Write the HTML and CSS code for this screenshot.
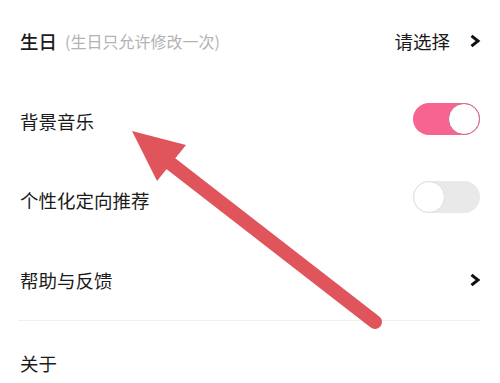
FILE: index.html
```html
<!DOCTYPE html>
<html lang="zh-CN">
<head>
<meta charset="utf-8">
<link rel="stylesheet" href="styles.css">
</head>
<body>
<div class="page">
  <div class="list">
    <div class="row row-1">
      <div class="label"><span class="title strong">生日</span><span class="hint">(生日只允许修改一次)</span></div>
      <div class="value">
        <span class="value-text">请选择</span>
        <svg class="chev" viewBox="0 0 12 14" width="12" height="14"><polyline points="2.5,1.8 9,7 2.5,12.2" fill="none" stroke="#111" stroke-width="3" stroke-linejoin="miter" stroke-linecap="butt"/></svg>
      </div>
    </div>
    <div class="row row-2">
      <div class="label"><span class="title">背景音乐</span></div>
      <div class="toggle on"><span class="knob"></span></div>
    </div>
    <div class="row row-3">
      <div class="label"><span class="title">个性化定向推荐</span></div>
      <div class="toggle off"><span class="knob"></span></div>
    </div>
    <div class="row row-4">
      <div class="label"><span class="title">帮助与反馈</span></div>
      <div class="value">
        <svg class="chev" viewBox="0 0 12 14" width="12" height="14"><polyline points="2.5,1.8 9,7 2.5,12.2" fill="none" stroke="#111" stroke-width="3" stroke-linejoin="miter" stroke-linecap="butt"/></svg>
      </div>
    </div>
    <div class="divider"></div>
    <div class="row row-5">
      <div class="label"><span class="title">关于</span></div>
    </div>
  </div>
  <svg class="arrow" viewBox="0 0 500 383" width="500" height="383">
    <line x1="170" y1="163" x2="375" y2="322" stroke="#e0545b" stroke-width="14" stroke-linecap="round"/>
    <polygon points="132,131 186,145 157,181" fill="#e0545b"/>
  </svg>
</div>
</body>
</html>
```

FILE: styles.css
```css
html, body {
  margin: 0;
  padding: 0;
  background: #ffffff;
}

.page {
  position: relative;
  width: 500px;
  height: 383px;
  overflow: hidden;
  font-family: "Noto Sans CJK SC", "Noto Sans", sans-serif;
  color: #1b1b1b;
}

.list {
  display: flex;
  flex-direction: column;
}

.row {
  display: flex;
  align-items: center;
  justify-content: space-between;
  padding: 0 20px 0 20px;
}

.row-1 { height: 82px; }
.row-2 { height: 78px; }
.row-3 { height: 80px; }
.row-4 { height: 80px; }
.row-5 { height: 84px; }

.label {
  display: flex;
  align-items: center;
}

.title {
  font-size: 18.5px;
  line-height: 24px;
  font-weight: 400;
}

.title.strong {
  font-weight: 500;
}

.hint {
  margin-left: 8px;
  font-size: 16px;
  line-height: 24px;
  color: #b3b3b3;
}

.value {
  display: flex;
  align-items: center;
}

.value-text {
  font-size: 18.5px;
  line-height: 24px;
  margin-right: 19px;
}

.chev {
  display: block;
  margin-right: -1px;
}

.toggle {
  position: relative;
  box-sizing: border-box;
  width: 67px;
  height: 32px;
  border-radius: 16px;
  margin-bottom: 4px;
}

.toggle.on {
  background: #f7648f;
}

.toggle.off {
  background: #e9e9e9;
  margin-bottom: 6px;
}

.knob {
  position: absolute;
  top: 0;
  width: 32px;
  height: 32px;
  box-sizing: border-box;
  border-radius: 50%;
  background: #ffffff;
}

.toggle.on .knob {
  right: 0;
  border: 1.5px solid #c86a88;
}

.toggle.off .knob {
  left: 0;
  border: 1px solid #dedede;
}

.divider {
  height: 1px;
  margin: 0 20px 0 18px;
  background: #f0f0f0;
}

.arrow {
  position: absolute;
  left: 0;
  top: 0;
  pointer-events: none;
}
```
